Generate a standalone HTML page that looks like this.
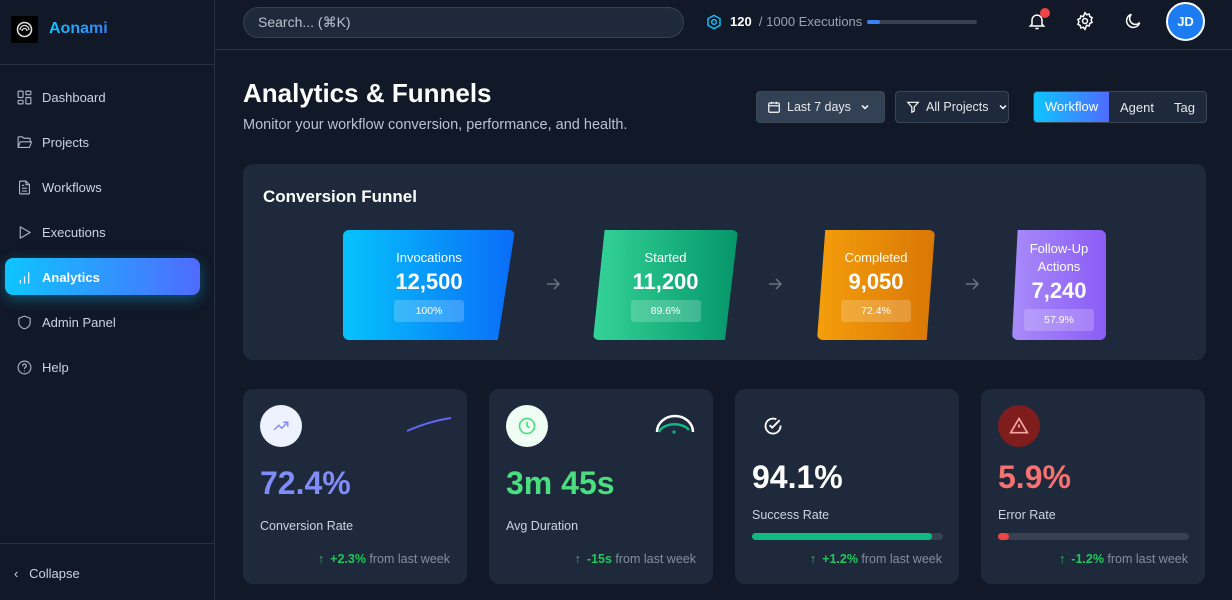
<!DOCTYPE html>
<html><head><meta charset="utf-8"><style>
*{box-sizing:border-box;margin:0;padding:0}
body{width:1232px;height:600px;overflow:hidden;background:#111827;font-family:"Liberation Sans",sans-serif;color:#e5e7eb;position:relative}
.abs{position:absolute}
.sb{left:0;top:0;width:215px;height:600px;background:#111827;border-right:1px solid #263142}
.nav{position:absolute;left:16px;font-size:13px;color:#cbd5e1;display:flex;align-items:center;gap:9px}
.nav svg{width:17px;height:17px;stroke:#aab4c3;fill:none;stroke-width:1.6;stroke-linecap:round;stroke-linejoin:round}
.card{position:absolute;background:#1e293b;border-radius:10px}
.fbox{position:absolute;top:230px;height:110px;color:#fff;text-align:center;border-radius:6px}
.fbox .l{font-size:13px;margin-top:20px}
.fbox .n{font-size:22px;font-weight:bold;margin-top:4px}
.fbox .p{display:inline-block;font-size:10.5px;padding:5px 0;width:70px;background:rgba(255,255,255,.2);border-radius:3px;margin-top:5px}
.arr{position:absolute;top:276px}
.stat .big{position:absolute;left:17px;font-size:32px;font-weight:bold}
.stat .lab{position:absolute;left:17px;font-size:12.5px;color:#cbd5e1}
.stat .ft{position:absolute;right:17px;top:163px;font-size:12.5px;color:#8390a2}
.stat .ft b{color:#22c55e}
.stat .ft i{font-style:normal;color:#22c55e;margin-right:6px}
.btn{position:absolute;top:91px;height:32px;border:1px solid #3a4556;border-radius:4px;font-size:12.5px;color:#e5e7eb;display:flex;align-items:center;padding-left:10px;gap:6px;white-space:nowrap}
.btn svg{flex-shrink:0}
</style></head><body>
<div class="abs sb">
  <div class="abs" style="left:11px;top:16px;width:27px;height:27px;background:#000;border-radius:2px">
    <svg width="27" height="27" viewBox="0 0 27 27"><circle cx="13.5" cy="13.5" r="7" fill="none" stroke="#ddd" stroke-width="1.6"/><path d="M9 14a4.5 4.5 0 0 1 9 0M11 15a2.5 2.5 0 0 1 5 0" stroke="#ddd" stroke-width="1.3" fill="none"/></svg>
  </div>
  <div class="abs" style="left:49px;top:20px;font-size:16px;font-weight:bold;background:linear-gradient(90deg,#0ec5ff,#3b82f6);-webkit-background-clip:text;color:transparent">Aonami</div>
  <div class="abs" style="left:0;top:64px;width:214px;border-top:1px solid #263142"></div>
  <div class="nav" style="top:89px"><svg viewBox="0 0 24 24"><rect x="3" y="3" width="7" height="9" rx="1"/><rect x="14" y="3" width="7" height="5" rx="1"/><rect x="14" y="12" width="7" height="9" rx="1"/><rect x="3" y="16" width="7" height="5" rx="1"/></svg>Dashboard</div>
  <div class="nav" style="top:134px"><svg viewBox="0 0 24 24"><path d="M3 19V5a1 1 0 0 1 1-1h5l2 2h8a1 1 0 0 1 1 1v3M3 19l3-8h16l-3 8z"/></svg>Projects</div>
  <div class="nav" style="top:179px"><svg viewBox="0 0 24 24"><path d="M14 3H6a1 1 0 0 0-1 1v16a1 1 0 0 0 1 1h12a1 1 0 0 0 1-1V8z"/><path d="M14 3v5h5M9 13h6M9 17h6M9 9h2"/></svg>Workflows</div>
  <div class="nav" style="top:224px"><svg viewBox="0 0 24 24"><path d="M6 4l14 8-14 8z"/></svg>Executions</div>
  <div class="abs" style="left:5px;top:258px;width:195px;height:37px;border-radius:8px;background:linear-gradient(90deg,#0ec5ff,#4f6bff);box-shadow:0 4px 14px rgba(14,197,255,.35)"></div>
  <div class="nav" style="top:269px;color:#fff;font-weight:bold"><svg viewBox="0 0 24 24" style="stroke:#fff"><path d="M6 20v-4M12 20v-9M18 20V5"/></svg>Analytics</div>
  <div class="nav" style="top:314px"><svg viewBox="0 0 24 24"><path d="M12 3l8 3v6c0 5-4 8-8 9-4-1-8-4-8-9V6z"/></svg>Admin Panel</div>
  <div class="nav" style="top:359px"><svg viewBox="0 0 24 24"><circle cx="12" cy="12" r="9"/><path d="M9.5 9.5a2.5 2.5 0 1 1 3.5 2.3c-.7.3-1 .9-1 1.7M12 17h.01"/></svg>Help</div>
  <div class="abs" style="left:0;top:543px;width:214px;border-top:1px solid #263142"></div>
  <div class="abs" style="left:14px;top:566px;font-size:13px;color:#cbd5e1">‹&nbsp;&nbsp;&nbsp;Collapse</div>
</div>
<!-- header -->
<div class="abs" style="left:215px;top:49px;width:1017px;border-top:1px solid #2a3446"></div>
<div class="abs" style="left:243px;top:7px;width:441px;height:31px;border:1px solid #364152;border-radius:16px;background:#1e293b;font-size:14px;color:#b9c2cf;padding:6px 0 0 14px">Search... (⌘K)</div>
<svg class="abs" style="left:706px;top:14px" width="16" height="16" viewBox="0 0 24 24" fill="none" stroke="#0ec5ff" stroke-width="2.2"><path d="M12 2l9 5v10l-9 5-9-5V7z"/><circle cx="12" cy="12" r="3.5"/></svg>
<div class="abs" style="left:730px;top:14px;font-size:13px;color:#9aa4b2"><b style="color:#fff">120</b>&nbsp; / 1000 Executions</div>
<div class="abs" style="left:867px;top:20px;width:110px;height:4px;border-radius:2px;background:#374151"><div style="width:13px;height:4px;border-radius:2px;background:#3b82f6"></div></div>
<svg class="abs" style="left:1027px;top:11px" width="20" height="20" viewBox="0 0 24 24" fill="none" stroke="#fff" stroke-width="1.8"><path d="M6 16V11a6 6 0 0 1 12 0v5l2 2H4zM10 21h4"/></svg>
<div class="abs" style="left:1040px;top:8px;width:10px;height:10px;border-radius:50%;background:#ef4444"></div>
<svg class="abs" style="left:1075px;top:11px" width="20" height="20" viewBox="0 0 24 24" fill="none" stroke="#fff" stroke-width="1.8"><circle cx="12" cy="12" r="3"/><path d="M12 2l2 2.5 3-.8.8 3 2.7 1.3-1.2 2.8 1.2 2.8-2.7 1.3-.8 3-3-.8L12 22l-2-2.5-3 .8-.8-3-2.7-1.3L4.7 13 3.5 10.2l2.7-1.3.8-3 3 .8z"/></svg>
<svg class="abs" style="left:1123px;top:11px" width="20" height="20" viewBox="0 0 24 24" fill="none" stroke="#fff" stroke-width="1.8"><path d="M20 14A8 8 0 1 1 10 4a6.5 6.5 0 0 0 10 10z"/></svg>
<div class="abs" style="left:1166px;top:2px;width:39px;height:39px;border-radius:50%;background:#1d7cf2;border:2px solid #fff;color:#fff;font-size:13px;font-weight:bold;text-align:center;line-height:35px">JD</div>
<!-- title -->
<div class="abs" style="left:243px;top:78px;font-size:26px;font-weight:bold;color:#fff">Analytics &amp; Funnels</div>
<div class="abs" style="left:243px;top:117px;font-size:14.5px;color:#b9c2cf">Monitor your workflow conversion, performance, and health.</div>
<div class="btn" style="left:756px;width:129px;background:#334155"><svg width="14" height="14" viewBox="0 0 24 24" fill="none" stroke="#fff" stroke-width="2"><rect x="3" y="5" width="18" height="16" rx="2"/><path d="M3 10h18M8 3v4M16 3v4"/></svg>Last 7 days <svg width="10" height="10" viewBox="0 0 10 10" style="margin-left:3px"><path d="M2 3.5l3 3 3-3" stroke="#fff" stroke-width="1.5" fill="none"/></svg></div>
<div class="btn" style="left:895px;width:114px;background:#1e293b"><svg width="14" height="14" viewBox="0 0 24 24" fill="none" stroke="#fff" stroke-width="2"><path d="M3 4h18l-7 8v7l-4 2v-9z"/></svg>All Projects <svg width="10" height="10" viewBox="0 0 10 10" style="margin-left:3px"><path d="M2 3.5l3 3 3-3" stroke="#fff" stroke-width="1.5" fill="none"/></svg></div>
<div class="abs" style="left:1033px;top:91px;width:174px;height:32px;border:1px solid #3a4556;border-radius:4px;background:#1e293b;font-size:13px;overflow:hidden">
  <div class="abs" style="left:0;top:0;width:75px;height:30px;background:linear-gradient(90deg,#0ec5ff,#4f6bff);color:#fff;text-align:center;line-height:30px">Workflow</div>
  <div class="abs" style="left:86px;top:8px">Agent</div>
  <div class="abs" style="left:140px;top:8px">Tag</div>
</div>
<!-- funnel -->
<div class="card" style="left:243px;top:164px;width:963px;height:196px"></div>
<div class="abs" style="left:263px;top:187px;font-size:17px;font-weight:bold;color:#fff">Conversion Funnel</div>
<div class="fbox" style="left:343px;width:172px;background:linear-gradient(90deg,#06c3fb,#0a6cf8);clip-path:polygon(0 0,100% 0,90% 100%,0 100%)"><div class="l">Invocations</div><div class="n">12,500</div><div class="p">100%</div></div>
<svg class="arr" style="left:545px" width="16" height="16" viewBox="0 0 16 16"><path d="M2 8h12M9 3l5 5-5 5" stroke="#6b7280" stroke-width="1.5" fill="none"/></svg>
<div class="fbox" style="left:593px;width:145px;background:linear-gradient(90deg,#34d399,#059669);clip-path:polygon(8% 0,100% 0,91% 100%,0 100%)"><div class="l">Started</div><div class="n">11,200</div><div class="p">89.6%</div></div>
<svg class="arr" style="left:767px" width="16" height="16" viewBox="0 0 16 16"><path d="M2 8h12M9 3l5 5-5 5" stroke="#6b7280" stroke-width="1.5" fill="none"/></svg>
<div class="fbox" style="left:817px;width:118px;background:linear-gradient(90deg,#f59e0b,#d97706);clip-path:polygon(7% 0,100% 0,93% 100%,0 100%)"><div class="l">Completed</div><div class="n">9,050</div><div class="p">72.4%</div></div>
<svg class="arr" style="left:964px" width="16" height="16" viewBox="0 0 16 16"><path d="M2 8h12M9 3l5 5-5 5" stroke="#6b7280" stroke-width="1.5" fill="none"/></svg>
<div class="fbox" style="left:1012px;width:94px;background:linear-gradient(90deg,#a78bfa,#8b5cf6);clip-path:polygon(6% 0,100% 0,100% 100%,0 100%)"><div class="l" style="margin-top:10px;line-height:18px">Follow-Up<br>Actions</div><div class="n" style="margin-top:2px">7,240</div><div class="p">57.9%</div></div>
<!-- stats -->
<div class="card stat" style="left:243px;top:389px;width:224px;height:195px">
  <div class="abs" style="left:17px;top:16px;width:42px;height:42px;border-radius:50%;background:#eef2ff"><svg style="margin:12px" width="18" height="18" viewBox="0 0 24 24" fill="none" stroke="#818cf8" stroke-width="2"><path d="M3 17l6-6 4 4 8-8M15 7h6v6"/></svg></div>
  <svg class="abs" style="left:162px;top:26px" width="48" height="20"><path d="M2 16Q25 6 46 3" stroke="#6366f1" stroke-width="2" fill="none"/></svg>
  <div class="big" style="top:76px;color:#818cf8">72.4%</div>
  <div class="lab" style="top:130px">Conversion Rate</div>
  <div class="ft"><i>↑</i><b>+2.3%</b> from last week</div>
</div>
<div class="card stat" style="left:489px;top:389px;width:224px;height:195px">
  <div class="abs" style="left:17px;top:16px;width:42px;height:42px;border-radius:50%;background:#f0fdf4"><svg style="margin:11px" width="20" height="20" viewBox="0 0 24 24" fill="none" stroke="#4ade80" stroke-width="2"><circle cx="12" cy="12" r="9"/><path d="M12 7v5l3 2"/></svg></div>
  <svg class="abs" style="left:165px;top:24px" width="42" height="22"><path d="M3 19A18 16 0 0 1 39 19" stroke="#fff" stroke-width="2.5" fill="none"/><path d="M5 19A16 10 0 0 1 35 17" stroke="#10b981" stroke-width="2.5" fill="none"/><circle cx="20" cy="19" r="1.6" fill="#10b981"/></svg>
  <div class="big" style="top:76px;color:#4ade80">3m 45s</div>
  <div class="lab" style="top:130px">Avg Duration</div>
  <div class="ft"><i>↑</i><b>-15s</b> from last week</div>
</div>
<div class="card stat" style="left:735px;top:389px;width:224px;height:195px">
  <svg class="abs" style="left:28px;top:27px" width="20" height="20" viewBox="0 0 24 24" fill="none" stroke="#fff" stroke-width="2.2"><path d="M21 11.5A9 9 0 1 1 16 4"/><path d="M8 11l3 3 9-9"/></svg>
  <div class="big" style="top:70px;color:#fff">94.1%</div>
  <div class="lab" style="top:119px">Success Rate</div>
  <div class="abs" style="left:17px;top:144px;width:191px;height:7px;border-radius:4px;background:#374151"><div style="width:180px;height:7px;border-radius:4px;background:#10b981"></div></div>
  <div class="ft"><i>↑</i><b>+1.2%</b> from last week</div>
</div>
<div class="card stat" style="left:981px;top:389px;width:224px;height:195px">
  <div class="abs" style="left:17px;top:16px;width:42px;height:42px;border-radius:50%;background:#7f1d1d"><svg style="margin:11px" width="20" height="20" viewBox="0 0 24 24" fill="none" stroke="#fca5a5" stroke-width="2"><path d="M12 3L2 20h20zM12 10v4M12 17h.01"/></svg></div>
  <div class="big" style="top:70px;color:#f87171">5.9%</div>
  <div class="lab" style="top:119px">Error Rate</div>
  <div class="abs" style="left:17px;top:144px;width:191px;height:7px;border-radius:4px;background:#374151"><div style="width:11px;height:7px;border-radius:4px;background:#ef4444"></div></div>
  <div class="ft"><i>↑</i><b>-1.2%</b> from last week</div>
</div>
</body></html>
